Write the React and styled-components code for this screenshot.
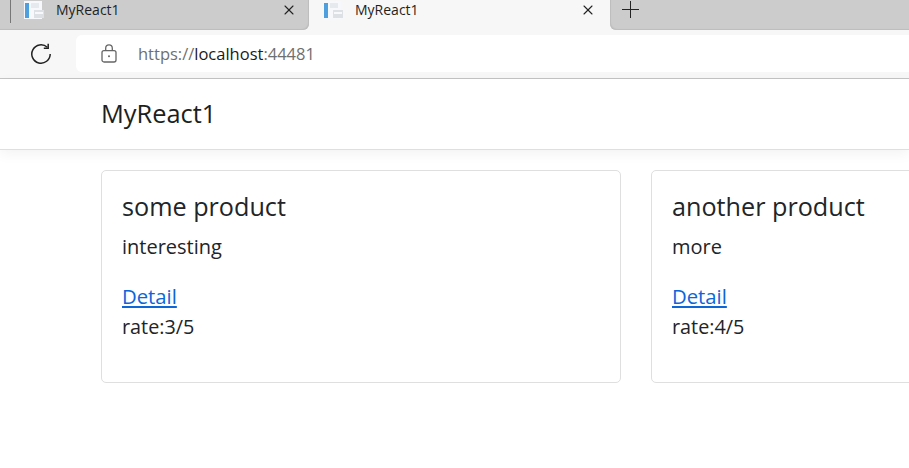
import React from "react";
import styled, { createGlobalStyle } from "styled-components";
import { X } from "lucide-react";

const GlobalStyle = createGlobalStyle`
  html, body {
    margin: 0;
    padding: 0;
    background: #ffffff;
    overflow: hidden;
  }
  * {
    box-sizing: border-box;
  }
`;

const Page = styled.div`
  width: 909px;
  height: 468px;
  overflow: hidden;
  font-family: "Open Sans", "Noto Sans", sans-serif;
  color: #212529;
`;

const TabStrip = styled.div`
  display: flex;
  height: 30px;
  background: #f7f7f7;
`;

const Tab = styled.div`
  display: flex;
  align-items: flex-start;
  flex: none;
  width: ${(p) => p.$width}px;
  height: 30px;
  padding-left: ${(p) => p.$indent}px;
  background: ${(p) => (p.$active ? "#f7f7f7" : "#cccccc")};
  border-bottom-right-radius: ${(p) => (p.$active ? 0 : 6)}px;
  box-shadow: ${(p) => (p.$active ? "none" : "inset -1px -1px 1px #bdbdbd")};
`;

const TabRest = styled.div`
  flex: 1;
  height: 30px;
  padding: 1px 0 0 12px;
  background: #cccccc;
  border-bottom-left-radius: 6px;
  box-shadow: inset 1px -1px 1px #bdbdbd;
`;

const Separator = styled.span`
  flex: none;
  width: 1px;
  height: 23px;
  margin-right: 13px;
  background: #777777;
`;

const TabTitle = styled.span`
  flex: none;
  width: ${(p) => p.$width}px;
  margin-left: 12px;
  font-size: 14px;
  line-height: 20px;
  color: #1f1f1f;
`;

const FavIcon = styled.svg`
  flex: none;
  display: block;
  width: 20px;
  height: 20px;
`;

const CloseIcon = styled(X)`
  flex: none;
  margin-top: 2px;
  color: #222222;
`;

const Toolbar = styled.div`
  display: flex;
  align-items: center;
  height: 49px;
  padding: 5px 0 6px 30px;
  background: #f7f7f7;
  border-bottom: 1px solid #c4c4c4;
`;

const AddressBar = styled.div`
  display: flex;
  align-items: center;
  flex: 1;
  height: 37px;
  margin-left: 24px;
  padding-left: 25px;
  background: #ffffff;
  border-radius: 6px 0 0 6px;
`;

const Url = styled.span`
  margin-left: 21px;
  font-size: 16.5px;
  color: #6f6f6f;

  b {
    font-weight: 400;
    color: #1a1a1a;
  }
`;

const Navbar = styled.div`
  height: 71px;
  padding: 18px 0 0 101px;
  background: #ffffff;
  border-bottom: 1px solid #dfdfdf;
  box-shadow: 0 4px 12px rgba(0, 0, 0, 0.05);
`;

const Brand = styled.div`
  font-size: 25.4px;
  line-height: 32px;
  color: #1c1f22;
`;

const CardRow = styled.div`
  display: flex;
  gap: 30px;
  padding: 20px 0 0 101px;
`;

const Card = styled.div`
  flex: none;
  width: 520px;
  height: 213px;
  padding: 19px 20px;
  background: #ffffff;
  border: 1px solid #dfdfdf;
  border-radius: 5px;
`;

const CardTitle = styled.div`
  font-size: 25.2px;
  line-height: 32px;
  color: #212529;
`;

const CardText = styled.div`
  margin-top: 10px;
  margin-bottom: 19px;
  font-size: 20px;
  line-height: 30px;
`;

const DetailLink = styled.a`
  display: block;
  width: fit-content;
  font-size: 20.3px;
  line-height: 31px;
  color: #0b66d8;
  text-decoration: underline;
`;

const Rate = styled.div`
  font-size: 19.8px;
  line-height: 30px;
`;

const PageFavicon = () => (
  <FavIcon viewBox="0 0 20 20">
    <rect x="0" y="1" width="18" height="18" fill="#f6f8fb" />
    <rect x="1" y="3" width="4" height="15" fill="#4f9fdf" />
    <rect x="7" y="3" width="8" height="5" fill="#e6e9ee" />
    <rect x="10" y="10" width="10" height="8" fill="#dde1e6" />
    <rect x="11" y="12" width="8" height="2" fill="#f6f8fb" />
  </FavIcon>
);

const ProductCard = ({ title, text, rate }) => (
  <Card>
    <CardTitle>{title}</CardTitle>
    <CardText>{text}</CardText>
    <DetailLink href="#">Detail</DetailLink>
    <Rate>rate:{rate}/5</Rate>
  </Card>
);

const App = () => {
  return (
    <Page>
      <GlobalStyle />
      <TabStrip>
        <Tab $width={309} $indent={10}>
          <Separator />
          <PageFavicon />
          <TabTitle $width={225}>MyReact1</TabTitle>
          <CloseIcon size={16} strokeWidth={1.6} />
        </Tab>
        <Tab $active $width={301} $indent={14}>
          <PageFavicon />
          <TabTitle $width={225}>MyReact1</TabTitle>
          <CloseIcon size={16} strokeWidth={1.6} />
        </Tab>
        <TabRest>
          <svg width="17" height="17" viewBox="0 0 17 17" stroke="#222222" strokeWidth="1">
            <path d="M0 8.5h17M8.5 0v17" />
          </svg>
        </TabRest>
      </TabStrip>
      <Toolbar>
        <svg width="22" height="22" viewBox="0 0 22 22" fill="none" stroke="#222222" strokeWidth="1.5">
          <path d="M20.2 11a9.2 9.2 0 1 1-2.9-6.7" />
          <path d="M18.2 0.8v4.4h-4.4" />
        </svg>
        <AddressBar>
          <svg width="16" height="19" viewBox="0 0 16 19" fill="none" stroke="#666666" strokeWidth="1.3">
            <rect x="1" y="6.6" width="14" height="11.4" rx="2" />
            <path d="M4.7 6.6V4.2a3.3 3.3 0 0 1 6.6 0v2.4" />
            <circle cx="8" cy="12.3" r="1" fill="#666666" stroke="none" />
          </svg>
          <Url>
            https://<b>localhost</b>:44481
          </Url>
        </AddressBar>
      </Toolbar>
      <Navbar>
        <Brand>MyReact1</Brand>
      </Navbar>
      <CardRow>
        <ProductCard title="some product" text="interesting" rate={3} />
        <ProductCard title="another product" text="more" rate={4} />
      </CardRow>
    </Page>
  );
};

export default App;
